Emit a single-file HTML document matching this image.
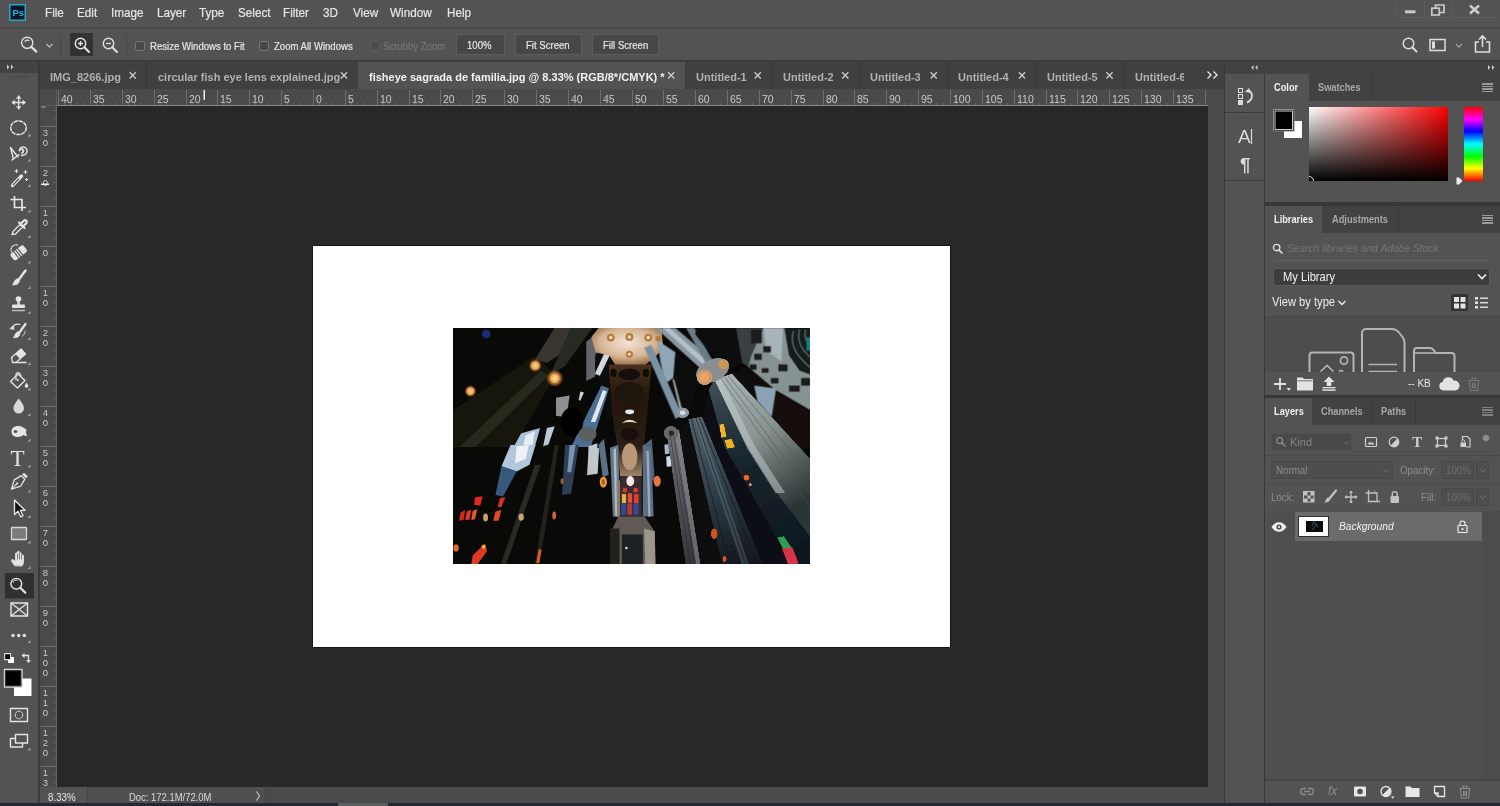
<!DOCTYPE html>
<html lang="en">
<head>
<meta charset="utf-8">
<title>Photoshop</title>
<style>
*{box-sizing:border-box;margin:0;padding:0}
html,body{width:1500px;height:806px;overflow:hidden;background:#535353}
body{position:relative;will-change:transform;font-family:"Liberation Sans",sans-serif;font-size:12px;color:#dcdcdc}
.a{position:absolute}
.t{position:absolute;white-space:nowrap;line-height:1}
svg{position:absolute;overflow:visible}
/* top bars */
#menubar{left:0;top:0;width:1500px;height:27px;background:#535353}
#optbar{left:0;top:27px;width:1500px;height:34px;background:#535353;border-top:2px solid #484848;border-bottom:1px solid #3a3a3a}
.menu{top:6px;font-size:13px;color:#e6e6e6;-webkit-text-stroke:.2px #e6e6e6;transform:scaleX(.9);transform-origin:0 50%}
.opt{top:40.500px;font-size:11px;color:#e6e6e6;-webkit-text-stroke:.2px #e6e6e6;transform:scaleX(.87);transform-origin:0 50%}
.btn{top:34px;height:21px;background:#474747;border:1px solid #5c5c5c}
/* doc tabs */
#tabbar{left:40px;top:61px;width:1185px;height:28px;background:#404040}
.tab{top:71.500px;font-size:11px;font-weight:bold;color:#b0b0b0}
.tsep{top:62px;width:1px;height:27px;background:#383838}
/* toolbar */
#tools{left:0;top:61px;width:38px;height:745px;background:#535353}
#toolshead{left:0;top:61px;width:38px;height:12px;background:#424242}
#gap1{left:38px;top:61px;width:2px;height:745px;background:#3a3a3a}
/* rulers */
#hruler{left:40px;top:89px;width:1168px;height:17px;background:#4a4a4a;border-bottom:1px solid #8a8a8a}
#vruler{left:40px;top:106px;width:17px;height:681px;background:#4a4a4a;border-right:1px solid #666}
.rl{font-size:11px;color:#c4c4c4}
#canvasbg{left:57px;top:106px;width:1151px;height:681px;background:#282828}
#vscroll{left:1208px;top:89px;width:16px;height:717px;background:#4a4a4a}
#status{left:40px;top:787px;width:1168px;height:19px;background:#4a4a4a}
#paper{left:313px;top:246px;width:637.300px;height:400.600px;background:#fff;box-shadow:0 0 0 1px #141414}
/* right dock */
#dockhead{left:1225px;top:61px;width:275px;height:13px;background:#424242}
#dockline{left:1224px;top:61px;width:1px;height:745px;background:#383838}
#iconstrip{left:1225px;top:74px;width:39px;height:732px;background:#535353}
#dockline2{left:1264px;top:74px;width:1px;height:732px;background:#383838}
.panel{left:1265px;width:235px;background:#535353}
.ptabs{left:1265px;width:235px;height:27px;background:#424242}
.ptab{font-size:11px;font-weight:bold;color:#a8a8a8;transform:scaleX(.84);transform-origin:0 50%}
.ptab.on{color:#f0f0f0}
.ptabon{background:#535353;height:27px}
.hamb{width:11px;height:9px;background:repeating-linear-gradient(to bottom,#9a9a9a 0,#9a9a9a 1.500px,transparent 1.500px,transparent 2.500px)}
.sep{left:1265px;width:235px;height:4px;background:#383838}
</style>
</head>
<body>
<!-- MENU BAR -->
<div id="menubar" class="a"></div>
<svg style="left:9px;top:4px" width="17" height="17" viewBox="0 0 17 17"><rect x="0.75" y="0.75" width="15.5" height="15.5" fill="#081828" stroke="#2aa6cc" stroke-width="1.500"/><text x="3.400" y="12.200" font-family="Liberation Sans, sans-serif" font-size="9.500" font-weight="bold" fill="#30b0dc">Ps</text></svg>
<div class="t menu" style="left:45px">File</div>
<div class="t menu" style="left:77px">Edit</div>
<div class="t menu" style="left:111px">Image</div>
<div class="t menu" style="left:157px">Layer</div>
<div class="t menu" style="left:199px">Type</div>
<div class="t menu" style="left:238px">Select</div>
<div class="t menu" style="left:283px">Filter</div>
<div class="t menu" style="left:323px">3D</div>
<div class="t menu" style="left:353px">View</div>
<div class="t menu" style="left:390px">Window</div>
<div class="t menu" style="left:447px">Help</div>
<!-- window controls -->
<svg style="left:1395px;top:2px" width="105" height="20" viewBox="0 0 105 20">
<path d="M1.500 0v15.500h100M29.500 0v15.500M57.500 0v15.500" stroke="#5d5d5d" stroke-width="1" fill="none"/>
<rect x="10" y="8.300" width="10.500" height="3" fill="#c9c9c9"/>
<rect x="36.800" y="6.200" width="7.500" height="6.800" fill="none" stroke="#c9c9c9" stroke-width="1.700"/>
<path d="M40.500 6.200V3h8.500v7.500h-4.500" fill="none" stroke="#c9c9c9" stroke-width="1.700"/>
<path d="M75 3.500l9 8M84 3.500l-9 8" stroke="#cdcdcd" stroke-width="2.500" fill="none"/>
</svg>
<div id="optbar" class="a"></div>
<!-- zoom tool icon -->
<svg style="left:18px;top:33px" width="40" height="24" viewBox="0 0 40 24">
<circle cx="9.200" cy="9.800" r="5.600" fill="none" stroke="#e0e0e0" stroke-width="1.400"/>
<path d="M13.300 13.900L18.300 18.600" stroke="#e0e0e0" stroke-width="2.200" stroke-linecap="round"/>
<path d="M6.800 8.600a3.200 3.200 0 0 1 4.600-.8" stroke="#e0e0e0" stroke-width="1.200" fill="none"/>
<path d="M28.5 11l3 3 3-3" stroke="#bdbdbd" stroke-width="1.3" fill="none"/>
</svg>
<div class="a" style="left:60px;top:33px;width:1px;height:23px;background:#474747"></div>
<div class="a" style="left:70px;top:33px;width:23px;height:23px;background:#333"></div>
<svg style="left:72px;top:35px" width="20" height="20" viewBox="0 0 20 20">
<circle cx="8.5" cy="8.5" r="5.2" fill="none" stroke="#e6e6e6" stroke-width="1.4"/>
<path d="M12.3 12.3L17 17" stroke="#e6e6e6" stroke-width="2" stroke-linecap="round"/>
<path d="M6 8.5h5M8.5 6v5" stroke="#e6e6e6" stroke-width="1.3"/>
</svg>
<svg style="left:100px;top:35px" width="20" height="20" viewBox="0 0 20 20">
<circle cx="8.5" cy="8.5" r="5.2" fill="none" stroke="#e0e0e0" stroke-width="1.4"/>
<path d="M12.3 12.3L17 17" stroke="#e0e0e0" stroke-width="2" stroke-linecap="round"/>
<path d="M6 8.5h5" stroke="#e0e0e0" stroke-width="1.3"/>
</svg>
<div class="a" style="left:126px;top:33px;width:1px;height:23px;background:#474747"></div>
<div class="a" style="left:135px;top:41px;width:9.500px;height:9.500px;border:1px solid #7a7a7a;border-radius:2.500px;background:#484848"></div>
<div class="t opt" style="left:150px">Resize Windows to Fit</div>
<div class="a" style="left:259px;top:41px;width:9.500px;height:9.500px;border:1px solid #7a7a7a;border-radius:2.500px;background:#484848"></div>
<div class="t opt" style="left:274px">Zoom All Windows</div>
<div class="a" style="left:370px;top:41px;width:9.500px;height:9.500px;border:1px solid #5c5c5c;border-radius:2.500px;background:#4c4c4c"></div>
<div class="t opt" style="left:383px;color:#7c7c7c;-webkit-text-stroke:0">Scrubby Zoom</div>
<div class="a btn" style="left:456px;width:49px"></div><div class="t opt" style="left:467px;top:40px">100%</div>
<div class="a btn" style="left:515px;width:67px"></div><div class="t opt" style="left:526px;top:40px">Fit Screen</div>
<div class="a btn" style="left:592px;width:67px"></div><div class="t opt" style="left:603px;top:40px">Fill Screen</div>
<!-- right icons -->
<svg style="left:1400px;top:34px" width="96" height="22" viewBox="0 0 96 22">
<circle cx="8.5" cy="9.5" r="5.3" fill="none" stroke="#dedede" stroke-width="1.5"/>
<path d="M12.5 13.5L16.5 17.5" stroke="#dedede" stroke-width="1.8" stroke-linecap="round"/>
<rect x="30" y="5.5" width="15" height="11" fill="none" stroke="#dedede" stroke-width="1.5"/>
<rect x="32" y="7.5" width="3" height="7" fill="#dedede"/>
<path d="M56 10l3 3 3-3" stroke="#a0a0a0" stroke-width="1.3" fill="none"/>
<path d="M79 8h-3.5v10h14V8H86" fill="none" stroke="#dedede" stroke-width="1.6"/>
<path d="M82.5 13V2.5M79 5.5l3.5-3.5 3.5 3.5" fill="none" stroke="#dedede" stroke-width="1.6"/>
</svg>

<!-- TOOLBAR -->
<div id="tools" class="a"></div>
<div id="toolshead" class="a"></div>
<div id="gap1" class="a"></div>
<svg style="left:0;top:61px" width="40" height="745" viewBox="0 61 40 745" fill="none" stroke="#e4e4e4" stroke-width="1.4" stroke-linejoin="round" stroke-linecap="round">
<!-- header chevrons -->
<path d="M7 64.5l2.3 2.5-2.3 2.5zM11 64.5l2.3 2.5-2.3 2.5z" fill="#d0d0d0" stroke="none"/>
<path d="M9 77h20" stroke="#4b4b4b" stroke-width="2" stroke-dasharray="1 1"/>
<!-- move -->
<g stroke-width="1.300"><path d="M18.700 96.500v12M12.700 102.500h12"/><path d="M16.700 98.200l2-2.600 2 2.600zM16.700 106.800l2 2.600 2-2.600zM14.400 100.500l-2.600 2 2.600 2zM23 100.500l2.600 2-2.600 2z" fill="#e4e4e4" stroke-width=".6"/></g>
<!-- elliptical marquee -->
<ellipse cx="18.500" cy="127.800" rx="7.800" ry="6.800" stroke-dasharray="3.200 1.800" stroke-width="1.500"/>
<path d="M30.500 136.5v-3l-3 3z" fill="#a4a4a4" stroke="none"/>
<!-- magnetic lasso -->
<path d="M20 148.500a4 4 0 1 1 3.500 6.500l-2 .5M10.500 147.500l7.500 9.500M10.500 147.500l3 11.500M12 160l7-5.500"/>
<path d="M19.500 150.500a2 2 0 1 1 2.500 2.500" stroke-width="1.800"/>
<path d="M30.500 161.5v-3l-3 3z" fill="#a4a4a4" stroke="none"/>
<!-- magic wand -->
<path d="M12.500 185.500l9-9.500" stroke-width="3.400"/><path d="M13.200 184.800l5.500-5.800" stroke="#535353" stroke-width="1.200"/>
<path d="M16.500 169.500v3M15 171h3M25.500 170.500v3M24 172h3M26.500 178.500v2M25.500 179.500h2" stroke-width="1.100"/>
<path d="M30.500 187v-3l-3 3z" fill="#a4a4a4" stroke="none"/>
<!-- crop -->
<path d="M14.500 196v11.500h11.500M10.500 199.500h11.500v11.500" stroke-width="1.700" stroke-linecap="butt"/>
<path d="M30.500 212.5v-3l-3 3z" fill="#a4a4a4" stroke="none"/>
<!-- eyedropper -->
<path d="M12 234.500l1-3 7-7 2.500 2.500-7 7z" stroke-width="1.300"/><path d="M19 222.500l5.500 5.500M21 223.500l3-3a1.800 1.800 0 0 1 2.500 2.500l-3 3" stroke-width="2.200"/>
<path d="M30.500 238v-3l-3 3z" fill="#a4a4a4" stroke="none"/>
<!-- healing brush -->
<g transform="rotate(-38 18.500 253)"><rect x="10.500" y="248.800" width="16.500" height="8.400" rx="2.500" fill="#e4e4e4" stroke="none"/><path d="M15.500 249v8M18 249v8M20.500 249v8" stroke="#535353" stroke-width="1.100"/></g>
<path d="M11.500 252a5 5 0 0 1 7-6.500" stroke-width="1.100" stroke-dasharray="1.500 1"/>
<path d="M30.500 263.5v-3l-3 3z" fill="#a4a4a4" stroke="none"/>
<!-- brush -->
<path d="M25.500 270.500l-7 9.500" stroke-width="2.400"/><path d="M17.500 279l1.800 1.800c0 3-3.500 4.500-7 4 2-1.500 1.500-5.200 5.200-5.800z" fill="#e4e4e4" stroke-width=".8"/>
<path d="M30.500 289v-3l-3 3z" fill="#a4a4a4" stroke="none"/>
<!-- stamp -->
<circle cx="18.500" cy="299" r="2.800" fill="#e4e4e4" stroke="none"/><path d="M17.300 300v5h2.400v-5z" fill="#e4e4e4" stroke="none"/><rect x="12" y="304.500" width="13" height="3.600" rx="1" fill="#e4e4e4" stroke="none"/><path d="M12.500 310.500h12" stroke-width="1.400" stroke="#bdbdbd"/>
<path d="M30.500 314v-3l-3 3z" fill="#a4a4a4" stroke="none"/>
<!-- history brush -->
<path d="M25.500 324l-6.500 9" stroke-width="2.200"/><path d="M18 332l1.800 1.800c0 3-3.200 4.200-6.500 3.800 2-1.500 1.200-5 4.700-5.600z" fill="#e4e4e4" stroke-width=".8"/>
<path d="M12 327.500a7 7 0 0 1 8-3" stroke-width="1.100"/><path d="M10 328.500l3.500-2.800.5 3.500z" fill="#e4e4e4" stroke-width=".6"/>
<path d="M25 331a7 7 0 0 1-3 5.500" stroke-width="1" stroke-dasharray="1.200 1.200"/>
<path d="M30.500 340v-3l-3 3z" fill="#a4a4a4" stroke="none"/>
<!-- eraser -->
<path d="M11.500 357.500l9.500-8.500 4.500 5-9.500 8.500h-3.500z" stroke-width="1.300"/><path d="M15.500 354l5.500-5 4.500 5-5.500 5z" fill="#e4e4e4" stroke="none"/><path d="M16 362.500h10" stroke-width="1.300"/>
<path d="M30.500 365v-3l-3 3z" fill="#a4a4a4" stroke="none"/>
<!-- paint bucket -->
<path d="M10.500 381.500l7.500-7.500 7 6.500-7.500 7.500z" stroke-width="1.400"/><path d="M16 380v-5.500a2 2 0 0 1 3.500-1.200l1.500 2.200" stroke-width="1.200"/><circle cx="17.800" cy="380" r="1" fill="#e4e4e4" stroke="none"/>
<path d="M26.500 382.500c1.200 1.800 1.800 2.800 1.800 3.600a1.800 1.800 0 0 1-3.600 0c0-.8.600-1.800 1.800-3.600z" fill="#e4e4e4" stroke="none"/>
<path d="M30.500 390.5v-3l-3 3z" fill="#a4a4a4" stroke="none"/>
<!-- blur (drop) -->
<path d="M18.700 398.500c3 4 5.300 6.800 5.300 9.700a5.300 5.300 0 0 1-10.600 0c0-2.900 2.300-5.700 5.300-9.700z" fill="#d8d8d8" stroke="none"/>
<path d="M30.500 416v-3l-3 3z" fill="#a4a4a4" stroke="none"/>
<!-- dodge -->
<path d="M11.500 431.500c0-3.800 3.500-6 7.500-5.500 3.500.4 5 2.500 7.500 3.500l-.5 2.500 1 4.500-3.500-1.500c-1.500 1.200-3.500 2-6 2-4 0-6-2.500-6-5.500z" fill="#e4e4e4" stroke="none"/><ellipse cx="15.500" cy="431.500" rx="1.900" ry="1.500" fill="#535353" stroke="none"/>
<path d="M30.500 441.5v-3l-3 3z" fill="#a4a4a4" stroke="none"/>
<!-- type tool -->
<text x="10.5" y="465.5" font-family="Liberation Serif, serif" font-size="23" fill="#e4e4e4" stroke="none">T</text>
<path d="M30.500 467.500v-3l-3 3z" fill="#a4a4a4" stroke="none"/>
<!-- pen -->
<g transform="rotate(45 18.500 482)"><path d="M18.500 492l-4.500-8.500 2-8h5l2 8z" stroke-width="1.300"/><path d="M18.500 492v-7" stroke-width="1"/><circle cx="18.500" cy="484" r="1.100" fill="#e4e4e4" stroke="none"/><rect x="15.800" y="471.500" width="5.400" height="2.600" fill="#e4e4e4" stroke="none"/></g>
<path d="M30.500 492.5v-3l-3 3z" fill="#a4a4a4" stroke="none"/>
<!-- path selection arrow -->
<path d="M14.500 500v14.500l3.500-3.200 2.700 5.500 2.300-1.100-2.700-5.400h4.700z" fill="#111" stroke="#eaeaea" stroke-width="1.300"/>
<path d="M30.500 518v-3l-3 3z" fill="#a4a4a4" stroke="none"/>
<!-- rectangle -->
<rect x="11.500" y="527.500" width="15" height="12" fill="#7a7a7a" stroke="#d8d8d8" stroke-width="1.300" rx=".5"/>
<path d="M30.500 543.5v-3l-3 3z" fill="#a4a4a4" stroke="none"/>
<!-- hand -->
<g transform="translate(0,-2)"><path d="M14.500 567.500c-1.500-2-3-4.200-3-5 0-1 1.200-1.500 2.200-.5l1.800 1.800v-8c0-1.400 2-1.400 2 0v-1.500c0-1.400 2-1.400 2 0v1.500c0-1.300 2-1.300 2 0v2c0-1.200 2-1.200 2 0v6.500c0 1.500-.8 2.500-1.500 3.500z" fill="#e4e4e4" stroke="#e4e4e4" stroke-width=".8"/><path d="M17.500 556v5M19.500 555v6M21.500 556v5" stroke="#535353" stroke-width=".7"/></g>
<path d="M30.500 569v-3l-3 3z" fill="#a4a4a4" stroke="none"/>
<!-- zoom (selected) -->
<rect x="5" y="573" width="29" height="25.500" fill="#303030" stroke="none"/>
<circle cx="16.300" cy="583.800" r="5.400" stroke-width="1.400"/><path d="M20.300 587.800l5 5" stroke-width="2.200"/><path d="M13.200 582.400a3.300 3.300 0 0 1 4-2.300" stroke-width="1"/>
<!-- frame tool -->
<rect x="11" y="603" width="16.500" height="13" stroke-width="1.400"/><path d="M11 603l16.500 13M27.500 603l-16.500 13" stroke-width="1.200"/>
<!-- dots -->
<circle cx="13" cy="635.500" r="1.700" fill="#e4e4e4" stroke="none"/><circle cx="18.700" cy="635.500" r="1.700" fill="#e4e4e4" stroke="none"/><circle cx="24.400" cy="635.500" r="1.700" fill="#e4e4e4" stroke="none"/>
<path d="M30.500 643v-3l-3 3z" fill="#a4a4a4" stroke="none"/>
<!-- default colours + swap -->
<rect x="8" y="657" width="6" height="6" fill="#fff" stroke="none"/><rect x="4.600" y="653.600" width="6" height="6" fill="#000" stroke="#e0e0e0" stroke-width="1.100"/>
<path d="M23.500 655.500h5v5.500" stroke-width="1.300" stroke-linecap="butt" stroke-linejoin="miter"/><path d="M24.500 653l-3 2.500 3 2.500zM26 660l2.500 3 2.500-3z" fill="#e4e4e4" stroke="none"/>
<!-- fg/bg -->
<rect x="14" y="678.500" width="17.500" height="17.500" fill="#fff" stroke="none"/>
<rect x="4.500" y="669.500" width="17.500" height="17.500" fill="#000" stroke="#d6d6d6" stroke-width="1.400"/>
<rect x="5.800" y="670.800" width="14.900" height="14.900" fill="none" stroke="#3a3a3a" stroke-width=".8"/>
<!-- quick mask -->
<rect x="10.500" y="708.500" width="17" height="13" stroke-width="1.400"/><circle cx="19" cy="715" r="3.800" stroke-width="1" stroke-dasharray="1.500 1"/>
<!-- screen mode -->
<rect x="15.500" y="734.500" width="12" height="8.500" stroke-width="1.400"/><path d="M15 738.500h-4.500v8.500h12v-3.500" stroke-width="1.400"/>
<path d="M30.500 750.5v-3l-3 3z" fill="#a4a4a4" stroke="none"/>
</svg>

<!-- DOC TABS -->
<div id="tabbar" class="a"></div>
<div class="a" style="left:358px;top:62px;width:327px;height:27px;background:#535353"></div>
<div class="a tsep" style="left:146px"></div>
<div class="a tsep" style="left:772px"></div>
<div class="a tsep" style="left:859px"></div>
<div class="a tsep" style="left:947px"></div>
<div class="a tsep" style="left:1036px"></div>
<div class="a tsep" style="left:1124px"></div>
<div class="t tab" style="left:50px">IMG_8266.jpg</div>
<div class="t tab" style="left:158px">circular fish eye lens explained.jpg</div>
<div class="t tab" style="left:369px;color:#f2f2f2">fisheye sagrada de familia.jpg @ 8.33% (RGB/8*/CMYK) *</div>
<div class="t tab" style="left:696px">Untitled-1</div>
<div class="t tab" style="left:783px">Untitled-2</div>
<div class="t tab" style="left:870px">Untitled-3</div>
<div class="t tab" style="left:958px">Untitled-4</div>
<div class="t tab" style="left:1047px">Untitled-5</div>
<div class="t tab" style="left:1135px;width:48.500px;overflow:hidden">Untitled-6</div>
<svg style="left:0;top:0" width="1500" height="100" viewBox="0 0 1500 100" fill="none" stroke="#cdcdcd" stroke-width="1.300"><path d="M129.6 72.300l6.200 6.200M135.8 72.300l-6.200 6.200"/><path d="M340.9 72.300l6.200 6.200M347.1 72.300l-6.200 6.200"/><path d="M668.1 72.300l6.200 6.200M674.3 72.300l-6.200 6.200"/><path d="M754.6 72.300l6.200 6.200M760.8 72.300l-6.200 6.200"/><path d="M842.2 72.300l6.200 6.200M848.4 72.300l-6.200 6.200"/><path d="M930.6 72.300l6.200 6.200M936.8 72.300l-6.200 6.200"/><path d="M1018.9 72.300l6.200 6.200M1025.1 72.300l-6.200 6.200"/><path d="M1106.4 72.300l6.200 6.200M1112.6 72.300l-6.200 6.200"/></svg>
<svg style="left:1206px;top:70px" width="14" height="10" viewBox="0 0 14 10"><path d="M1.5 1.5l3.5 3.5-3.5 3.5M7.5 1.5l3.5 3.5-3.5 3.5" stroke="#e4e4e4" stroke-width="1.4" fill="none"/></svg>

<!-- RULERS + CANVAS -->
<div id="hruler" class="a"></div>
<div id="vruler" class="a"></div>
<div id="canvasbg" class="a"></div>
<svg style="left:40px;top:89px" width="1167" height="17" viewBox="0 0 1167 17" font-family="Liberation Sans, sans-serif" font-size="10.5" fill="#c8c8c8"><path d="M24.6 14v2M30.9 14v2M37.3 14v2M43.7 14v2M56.4 14v2M62.8 14v2M69.2 14v2M75.5 14v2M88.3 14v2M94.6 14v2M101.0 14v2M107.4 14v2M120.1 14v2M126.5 14v2M132.9 14v2M139.2 14v2M152.0 14v2M158.3 14v2M164.7 14v2M171.1 14v2M183.8 14v2M190.2 14v2M196.6 14v2M202.9 14v2M215.7 14v2M222.0 14v2M228.4 14v2M234.8 14v2M247.5 14v2M253.9 14v2M260.3 14v2M266.6 14v2M279.4 14v2M285.7 14v2M292.1 14v2M298.5 14v2M311.2 14v2M317.6 14v2M324.0 14v2M330.3 14v2M343.1 14v2M349.4 14v2M355.8 14v2M362.2 14v2M374.9 14v2M381.3 14v2M387.7 14v2M394.0 14v2M406.8 14v2M413.1 14v2M419.5 14v2M425.9 14v2M438.6 14v2M445.0 14v2M451.4 14v2M457.7 14v2M470.5 14v2M476.8 14v2M483.2 14v2M489.6 14v2M502.3 14v2M508.7 14v2M515.1 14v2M521.4 14v2M534.2 14v2M540.5 14v2M546.9 14v2M553.3 14v2M566.0 14v2M572.4 14v2M578.8 14v2M585.1 14v2M597.9 14v2M604.2 14v2M610.6 14v2M617.0 14v2M629.7 14v2M636.1 14v2M642.5 14v2M648.8 14v2M661.6 14v2M667.9 14v2M674.3 14v2M680.7 14v2M693.4 14v2M699.8 14v2M706.2 14v2M712.5 14v2M725.3 14v2M731.6 14v2M738.0 14v2M744.4 14v2M757.1 14v2M763.5 14v2M769.9 14v2M776.2 14v2M789.0 14v2M795.3 14v2M801.7 14v2M808.1 14v2M820.8 14v2M827.2 14v2M833.6 14v2M839.9 14v2M852.7 14v2M859.0 14v2M865.4 14v2M871.8 14v2M884.5 14v2M890.9 14v2M897.3 14v2M903.6 14v2M916.4 14v2M922.7 14v2M929.1 14v2M935.5 14v2M948.2 14v2M954.6 14v2M961.0 14v2M967.3 14v2M980.1 14v2M986.4 14v2M992.8 14v2M999.2 14v2M1011.9 14v2M1018.3 14v2M1024.7 14v2M1031.0 14v2M1043.8 14v2M1050.1 14v2M1056.5 14v2M1062.9 14v2M1075.6 14v2M1082.0 14v2M1088.4 14v2M1094.7 14v2M1107.5 14v2M1113.8 14v2M1120.2 14v2M1126.6 14v2M1139.3 14v2M1145.7 14v2M1152.1 14v2M1158.4 14v2" stroke="#6c6c6c" stroke-width="1"/><path d="M18.5 1v15M50.5 1v15M82.5 1v15M114.5 1v15M146.5 1v15M177.5 1v15M209.5 1v15M241.5 1v15M273.5 1v15M305.5 1v15M337.5 1v15M369.5 1v15M400.5 1v15M432.5 1v15M464.5 1v15M496.5 1v15M528.5 1v15M560.5 1v15M592.5 1v15M623.5 1v15M655.5 1v15M687.5 1v15M719.5 1v15M751.5 1v15M783.5 1v15M814.5 1v15M846.5 1v15M878.5 1v15M910.5 1v15M942.5 1v15M974.5 1v15M1006.5 1v15M1037.5 1v15M1069.5 1v15M1101.5 1v15M1133.5 1v15M1165.5 1v15" stroke="#6e6e6e" stroke-width="1"/><text x="21.0" y="13.5">40</text><text x="53.0" y="13.5">35</text><text x="85.0" y="13.5">30</text><text x="117.0" y="13.5">25</text><text x="149.0" y="13.5">20</text><text x="180.0" y="13.5">15</text><text x="212.0" y="13.5">10</text><text x="244.0" y="13.5">5</text><text x="276.0" y="13.5">0</text><text x="308.0" y="13.5">5</text><text x="340.0" y="13.5">10</text><text x="372.0" y="13.5">15</text><text x="403.0" y="13.5">20</text><text x="435.0" y="13.5">25</text><text x="467.0" y="13.5">30</text><text x="499.0" y="13.5">35</text><text x="531.0" y="13.5">40</text><text x="563.0" y="13.5">45</text><text x="595.0" y="13.5">50</text><text x="626.0" y="13.5">55</text><text x="658.0" y="13.5">60</text><text x="690.0" y="13.5">65</text><text x="722.0" y="13.5">70</text><text x="754.0" y="13.5">75</text><text x="786.0" y="13.5">80</text><text x="817.0" y="13.5">85</text><text x="849.0" y="13.5">90</text><text x="881.0" y="13.5">95</text><text x="913.0" y="13.5">100</text><text x="945.0" y="13.5">105</text><text x="977.0" y="13.5">110</text><text x="1009.0" y="13.5">115</text><text x="1040.0" y="13.5">120</text><text x="1072.0" y="13.5">125</text><text x="1104.0" y="13.5">130</text><text x="1136.0" y="13.5">135</text><rect x="163.5" y="1" width="1.5" height="10" fill="#ededed"/></svg>
<svg style="left:40px;top:106px" width="17" height="680" viewBox="0 0 17 680" font-family="Liberation Sans, sans-serif" font-size="9.500" fill="#c8c8c8"><path d="M14 4.5h2M14 12.5h2M14 28.5h2M14 36.5h2M14 44.5h2M14 52.5h2M14 68.5h2M14 76.5h2M14 84.5h2M14 92.5h2M14 108.5h2M14 116.5h2M14 124.5h2M14 132.5h2M14 148.5h2M14 156.5h2M14 164.5h2M14 172.5h2M14 188.5h2M14 196.5h2M14 204.5h2M14 212.5h2M14 228.5h2M14 236.5h2M14 244.5h2M14 252.5h2M14 268.5h2M14 276.5h2M14 284.5h2M14 292.5h2M14 308.5h2M14 316.5h2M14 324.5h2M14 332.5h2M14 348.5h2M14 356.5h2M14 364.5h2M14 372.5h2M14 388.5h2M14 396.5h2M14 404.5h2M14 412.5h2M14 428.5h2M14 436.5h2M14 444.5h2M14 452.5h2M14 468.5h2M14 476.5h2M14 484.5h2M14 492.5h2M14 508.5h2M14 516.5h2M14 524.5h2M14 532.5h2M14 548.5h2M14 556.5h2M14 564.5h2M14 572.5h2M14 588.5h2M14 596.5h2M14 604.5h2M14 612.5h2M14 628.5h2M14 636.5h2M14 644.5h2M14 652.5h2M14 668.5h2M14 676.5h2" stroke="#646464" stroke-width="1"/><path d="M1 20.5h15M1 60.5h15M1 100.5h15M1 140.5h15M1 180.5h15M1 220.5h15M1 260.5h15M1 300.5h15M1 340.5h15M1 380.5h15M1 420.5h15M1 460.5h15M1 500.5h15M1 540.5h15M1 580.5h15M1 620.5h15M1 660.5h15" stroke="#6e6e6e" stroke-width="1"/><text x="2.800" y="30.3">3</text><text x="2.800" y="40.1">0</text><text x="2.800" y="70.3">2</text><text x="2.800" y="80.1">0</text><text x="2.800" y="110.3">1</text><text x="2.800" y="120.1">0</text><text x="2.800" y="150.3">0</text><text x="2.800" y="190.3">1</text><text x="2.800" y="200.1">0</text><text x="2.800" y="230.3">2</text><text x="2.800" y="240.1">0</text><text x="2.800" y="270.3">3</text><text x="2.800" y="280.1">0</text><text x="2.800" y="310.3">4</text><text x="2.800" y="320.1">0</text><text x="2.800" y="350.3">5</text><text x="2.800" y="360.1">0</text><text x="2.800" y="390.3">6</text><text x="2.800" y="400.1">0</text><text x="2.800" y="430.3">7</text><text x="2.800" y="440.1">0</text><text x="2.800" y="470.3">8</text><text x="2.800" y="480.1">0</text><text x="2.800" y="510.3">9</text><text x="2.800" y="520.1">0</text><text x="2.800" y="550.3">1</text><text x="2.800" y="560.1">0</text><text x="2.800" y="569.9">0</text><text x="2.800" y="590.3">1</text><text x="2.800" y="600.1">1</text><text x="2.800" y="609.9">0</text><text x="2.800" y="630.3">1</text><text x="2.800" y="640.1">2</text><text x="2.800" y="649.9">0</text><text x="2.800" y="670.3">1</text><text x="2.800" y="680.1">3</text><rect x="1" y="77.500" width="8" height="1.500" fill="#ededed"/><rect x="1.500" y="0.500" width="4" height="1" fill="#b4b4b4"/></svg>
<div class="a" style="left:40px;top:89px;width:17px;height:17px;background:#4a4a4a;border-right:1px solid #5a5a5a;border-bottom:1px solid #5a5a5a"></div>
<div id="vscroll" class="a"></div>
<div id="status" class="a"></div>
<div class="a" style="left:40px;top:787px;width:47px;height:19px;background:#535353"></div>
<div class="t" style="left:48px;top:791.500px;font-size:10.500px;color:#e4e4e4;transform:scaleX(.93);transform-origin:0 50%">8.33%</div>
<div class="a" style="left:87px;top:787px;width:178px;height:19px;background:#505050;border-left:1px solid #464646;border-right:1px solid #464646"></div>
<div class="t" style="left:129px;top:791.500px;font-size:10.500px;color:#dadada;transform:scaleX(.9);transform-origin:0 50%">Doc: 172.1M/72.0M</div>
<svg style="left:254px;top:790px" width="8" height="12" viewBox="0 0 8 12"><path d="M2.500 1.500l3 4.500-3 4.500" fill="none" stroke="#c8c8c8" stroke-width="1.100"/></svg>
<div id="paper" class="a"></div>
<!--PHOTO-->
<svg style="left:453px;top:328px" width="357" height="236" viewBox="453 328 357 236">
<defs>
<clipPath id="pc"><rect x="453" y="328" width="357" height="236"/></clipPath>
<filter id="b1" x="-5%" y="-5%" width="110%" height="110%"><feGaussianBlur stdDeviation="0.75"/></filter>
<radialGradient id="gl"><stop offset="0" stop-color="#ffe0a0"/><stop offset=".55" stop-color="#e89a48"/><stop offset="1" stop-color="#6a3008" stop-opacity="0"/></radialGradient>
<radialGradient id="gceil" cx=".5" cy=".4" r=".65"><stop offset="0" stop-color="#f4e4d6"/><stop offset=".6" stop-color="#d6b494"/><stop offset="1" stop-color="#8c643c"/></radialGradient>
<linearGradient id="gC" gradientUnits="userSpaceOnUse" x1="870" y1="200" x2="1150" y2="560"><stop offset="0" stop-color="#a9b4b6"/><stop offset=".45" stop-color="#8a9492"/><stop offset=".8" stop-color="#4e5856"/><stop offset="1" stop-color="#2a3434"/></linearGradient>
<linearGradient id="gCs" gradientUnits="userSpaceOnUse" x1="850" y1="230" x2="1100" y2="760"><stop offset="0" stop-color="#3c4c54"/><stop offset=".4" stop-color="#18262e"/><stop offset="1" stop-color="#0e181e"/></linearGradient>
<linearGradient id="gB" gradientUnits="userSpaceOnUse" x1="790" y1="320" x2="920" y2="770"><stop offset="0" stop-color="#52626c"/><stop offset=".5" stop-color="#303e48"/><stop offset="1" stop-color="#12191e"/></linearGradient>
<linearGradient id="gA" gradientUnits="userSpaceOnUse" x1="720" y1="360" x2="790" y2="770"><stop offset="0" stop-color="#727076"/><stop offset="1" stop-color="#36343a"/></linearGradient>
<linearGradient id="gvault" x1="0" y1="0" x2="0" y2="1"><stop offset="0" stop-color="#4a301c"/><stop offset=".3" stop-color="#22160c"/><stop offset=".75" stop-color="#2c2016"/><stop offset="1" stop-color="#a08468"/></linearGradient>
</defs>
<g clip-path="url(#pc)">
<rect x="453" y="328" width="357" height="236" fill="#090908"/>
<g filter="url(#b1)">

<!-- ===== Q1 upper-left (zoom 450,325 scale 6.604) ===== -->
<g transform="translate(450,325) scale(0.15142)">
<polygon points="20,806 420,806 700,330 560,200 20,560" fill="#12130d"/>
<polygon points="60,806 170,806 650,335 600,300" fill="#27291a"/>
<polygon points="690,20 800,20 720,200 640,250 560,230" fill="#38362e"/>
<polygon points="800,20 940,20 760,270 660,330 720,200" fill="#282a24"/>
<circle cx="240" cy="60" r="28" fill="#1c3a9a" opacity=".8"/>
<circle cx="135" cy="437" r="42" fill="url(#gl)"/>
<circle cx="563" cy="268" r="46" fill="url(#gl)"/>
<circle cx="692" cy="352" r="60" fill="url(#gl)"/>
<circle cx="692" cy="352" r="36" fill="none" stroke="#7a4a18" stroke-width="8" opacity=".6"/>
<polygon points="900,110 1000,30 1040,30 960,200 960,340 900,370" fill="#62666a"/>
<polygon points="960,200 1060,200 1075,600 1040,640 1000,400 960,340" fill="#0e0c0a"/>
<polygon points="1040,140 1078,152 990,335 957,322" fill="#d4d8dc"/>
<polygon points="1000,400 1050,420 930,806 800,806 900,600" fill="#4e6e92"/>
<polygon points="1010,430 1035,440 960,640 930,640" fill="#dfe8f0"/>
<polygon points="700,480 790,465 770,610 700,600" fill="#8c9094"/>
<polygon points="860,440 885,445 860,500 850,495" fill="#c8d0d8"/>
<ellipse cx="805" cy="640" rx="75" ry="95" fill="#060606"/>
<polygon points="470,715 595,680 560,806 420,806" fill="#a9c0d8"/>
<polygon points="500,730 560,700 545,806 480,806" fill="#e4ecf4"/>
<polygon points="640,680 692,668 650,790 615,800" fill="#bcc8d4"/>
</g>

<!-- ===== Q3 lower-left (zoom 450,445) ===== -->
<g transform="translate(450,445) scale(0.15142)">
<polygon points="400,0 565,0 525,130 440,175 340,140" fill="#b4c6da"/>
<polygon points="440,10 520,0 500,90 430,120" fill="#eef2f6"/>
<polygon points="340,140 440,175 350,340 300,330" fill="#38587e"/>
<polygon points="560,130 600,130 370,790 335,790" fill="#2a2a22"/>
<polygon points="690,0 720,0 590,790 560,790" fill="#22221c"/>
<polygon points="760,0 850,0 800,320 740,330" fill="#2e4054"/>
<polygon points="790,0 830,0 800,180 775,180" fill="#7894b0"/>
<polygon points="165,345 215,338 200,400 160,395" fill="#e02c20"/>
<polygon points="70,445 100,430 90,495 60,500" fill="#d42a1c"/>
<polygon points="110,440 140,428 130,492 100,497" fill="#e0381c"/>
<polygon points="150,435 180,425 165,490 140,495" fill="#e45a28"/>
<ellipse cx="235" cy="478" rx="16" ry="26" fill="#c8a070"/>
<polygon points="330,350 365,345 340,410 315,410" fill="#d83020"/>
<polygon points="300,440 340,430 320,500 285,500" fill="#e04a28"/>
<ellipse cx="470" cy="476" rx="18" ry="24" fill="#c6a470"/>
<ellipse cx="40" cy="680" rx="18" ry="24" fill="#e06828"/>
<polygon points="150,730 230,650 245,700 180,790 140,790" fill="#e03a20"/>
<ellipse cx="222" cy="672" rx="14" ry="14" fill="#f0b040"/>
<ellipse cx="688" cy="465" rx="12" ry="26" fill="#d86a28"/>
<ellipse cx="740" cy="240" rx="10" ry="20" fill="#a05a28"/>
<polygon points="585,690 605,690 590,780 570,780" fill="#e05a28"/>
<polygon points="915,30 985,20 975,190 905,200" fill="#bfc2c8"/>
</g>

<!-- ===== M centre strip (zoom 580,325 scale 3.342) ===== -->
<g transform="translate(580,325) scale(0.29925)">
<!-- ceiling -->
<polygon points="38,40 62,10 272,10 278,80 245,112 218,134 118,134 98,102 52,92" fill="url(#gceil)"/>
<g fill="#b47c3c"><circle cx="103" cy="42" r="13"/><circle cx="165" cy="40" r="13"/><circle cx="228" cy="42" r="13"/><circle cx="262" cy="46" r="10"/><circle cx="165" cy="98" r="12"/></g>
<g fill="#f2dcb8"><circle cx="103" cy="42" r="6"/><circle cx="165" cy="40" r="6"/><circle cx="228" cy="42" r="6"/><circle cx="165" cy="98" r="5"/></g>
<!-- vault -->
<polygon points="96,132 240,132 225,300 214,400 206,505 134,505 124,400 108,300" fill="url(#gvault)"/>
<ellipse cx="165" cy="165" rx="36" ry="20" fill="#140e0a"/>
<ellipse cx="165" cy="225" rx="48" ry="34" fill="#1c120c"/>
<ellipse cx="112" cy="160" rx="10" ry="14" fill="#0c0806"/><ellipse cx="220" cy="160" rx="10" ry="14" fill="#0c0806"/>
<ellipse cx="166" cy="290" rx="15" ry="8" fill="#e4e8f0"/>
<path d="M140 328q26-22 52 0q-26-8-52 0z" fill="#ecd8c0"/>
<ellipse cx="166" cy="365" rx="30" ry="22" fill="#1a100a"/>
<ellipse cx="166" cy="440" rx="26" ry="45" fill="#b89878"/>
<!-- side of vault (dark cols + pale strips) -->
<polygon points="28,405 58,395 60,480 32,490" fill="#c0c8cc"/>
<polygon points="62,400 80,380 96,500 76,510" fill="#5a6e84"/>
<polygon points="214,400 240,380 250,520 228,520" fill="#4e6278"/>
<ellipse cx="25" cy="365" rx="30" ry="24" fill="#5c5e5e"/>
<ellipse cx="78" cy="525" rx="12" ry="18" fill="#f09a3a"/><ellipse cx="78" cy="525" rx="5" ry="10" fill="#a85a18"/>
<ellipse cx="258" cy="522" rx="12" ry="18" fill="#e8743a"/>
<polygon points="100,410 128,400 134,640 110,640" fill="#66788c"/>
<polygon points="112,415 120,412 126,640 118,640" fill="#b0bcc8"/>
<polygon points="210,400 238,410 246,640 210,640" fill="#5c6e84"/>
<polygon points="222,420 230,422 236,640 228,640" fill="#9aa8b8"/>
<polygon points="122,520 134,520 134,640 124,640" fill="#8a7a68"/>
<!-- stained glass -->
<rect x="134" y="505" width="72" height="135" fill="#3a2c30"/>
<ellipse cx="168" cy="522" rx="13" ry="17" fill="#fce8e0"/>
<circle cx="150" cy="552" r="8" fill="#d83a2a"/><circle cx="186" cy="552" r="8" fill="#d83a2a"/>
<rect x="140" y="565" width="14" height="30" fill="#e8b040"/><rect x="160" y="562" width="14" height="32" fill="#e0503a"/><rect x="180" y="565" width="16" height="30" fill="#d8402e"/>
<rect x="138" y="596" width="16" height="38" fill="#2c4c9c"/><rect x="158" y="596" width="16" height="38" fill="#b83838"/><rect x="178" y="596" width="18" height="38" fill="#3a4a8c"/>
<!-- apse bottom -->
<polygon points="128,640 216,640 250,690 252,800 100,800 104,690" fill="#5e5a54"/>
<polygon points="214,680 250,690 252,800 218,800" fill="#9c968c"/>
<rect x="140" y="700" width="70" height="100" fill="#1c2026"/>
<rect x="100" y="680" width="32" height="120" fill="#24221e"/>
<circle cx="155" cy="745" r="4" fill="#f0f0f0"/>
<!-- white window right of vault -->
<polygon points="288,440 306,436 308,472 290,474" fill="#d0dcec"/>
<polygon points="282,400 296,398 298,430 284,432" fill="#a8b8cc"/>
</g>

<!-- ===== Q2 upper-right (zoom 630,325) ===== -->
<g transform="translate(630,325) scale(0.15142)">
<polygon points="170,20 300,20 570,250 480,300" fill="#8796a0"/>
<polygon points="215,20 262,20 535,262 505,280" fill="#b4c0c8"/>
<polygon points="370,20 425,20 545,235 500,250" fill="#6a7c88"/>
<polygon points="180,100 300,180 285,350 235,385 200,240" fill="#8ea6b6"/>
<polygon points="95,150 140,130 345,600 300,620" fill="#7a92a4"/>
<polygon points="280,360 330,350 360,560 330,570" fill="#9aa4aa"/>
<polygon points="300,185 480,300 440,420 400,560 345,560 290,350" fill="#100c0a"/>
<polygon points="440,20 720,20 760,250 650,300 570,240 430,60" fill="#0a0a0a"/>
<!-- wall upper right -->
<polygon points="700,20 890,20 800,210 780,275 740,250" fill="#394143"/>
<polygon points="880,20 1030,20 1202,330 1202,570 960,430 780,275 800,205" fill="#879292"/>
<polygon points="880,20 1010,20 1000,240 900,170" fill="#a8b4b8"/>
<g fill="#1a1c1c"><rect x="800" y="30" width="70" height="90"/><rect x="880" y="140" width="50" height="40"/><rect x="820" y="190" width="50" height="40"/><rect x="790" y="260" width="45" height="35"/><rect x="980" y="260" width="60" height="45"/><rect x="1130" y="350" width="60" height="50"/><rect x="1050" y="400" width="70" height="40"/><rect x="930" y="350" width="50" height="35"/><rect x="870" y="285" width="45" height="30"/></g>
<polygon points="1020,20 1202,20 1202,330 1120,300 1050,200" fill="#121a1a"/>
<path d="M1080 40q-40 120 110 240M1120 30q-30 100 80 190M1160 30q-20 60 40 130" stroke="#5a6a6c" stroke-width="10" fill="none"/>
<rect x="1165" y="80" width="30" height="90" fill="#1a7a80"/>
<!-- dark right of column C -->
<polygon points="660,320 760,270 960,430 1202,570 1202,806 1090,806" fill="#0c0a08"/>
<polygon points="940,440 1202,575 1202,806 1100,806 930,610" fill="#14100c"/>
<polygon points="820,400 965,420 935,610 840,500" fill="#8aa2b4"/>
</g>

<!-- ===== Z0 big columns (zoom 440,315 scale 3.1) ===== -->
<g transform="translate(440,315) scale(0.32258)">
<!-- column A -->
<polygon points="702,362 741,355 808,775 762,775" fill="url(#gA)"/>
<polygon points="728,360 741,358 808,775 794,775" fill="#908e96" opacity=".55"/>
<circle cx="716" cy="366" r="22" fill="#66686a"/><circle cx="717" cy="366" r="8" fill="#262626"/>
<!-- gap between A and B -->
<polygon points="741,355 772,322 876,775 808,775" fill="#0b0d0f"/>
<!-- column B -->
<polygon points="770,323 812,315 1002,775 875,775" fill="url(#gB)"/>
<polygon points="787,320 800,317 958,775 936,775" fill="#7c8e98" opacity=".3"/>
<ellipse cx="752" cy="303" rx="20" ry="16" fill="#8e98a2"/><ellipse cx="752" cy="303" rx="9" ry="7" fill="#d4dce4"/>
<!-- gap between B and C shade -->
<polygon points="812,315 835,232 885,409 965,552 1090,775 1002,775" fill="#0a1014"/>
<!-- column C shade -->
<polygon points="833,232 850,200 953,409 1044,552 1153,694 1153,775 1090,775 965,552 882,409" fill="url(#gCs)"/>
<!-- column C lit -->
<polygon points="850,200 905,182 1153,452 1153,694 1044,552 953,409" fill="url(#gC)"/>
<polygon points="853,205 872,198 975,405 1070,552 1040,552 953,415" fill="#c4cdd0" opacity=".5"/>
<!-- fluting -->
<path d="M893 188L1153 500M882 192L1153 560M870 196L1100 520L1153 610" stroke="#4e5856" stroke-width="3" opacity=".45" fill="none"/>
<path d="M779 321L898 775M793 318L948 775M803 316L985 775" stroke="#10181e" stroke-width="4" opacity=".5" fill="none"/>
<path d="M712 362L776 775M722 360L790 775" stroke="#2a282e" stroke-width="3" opacity=".5" fill="none"/>
<!-- capital C -->
<ellipse cx="845" cy="172" rx="54" ry="34" fill="#8a8e90" transform="rotate(-25 845 172)"/>
<circle cx="820" cy="193" r="24" fill="#c89c6c"/><circle cx="820" cy="193" r="15" fill="#e8a264"/>
<circle cx="879" cy="153" r="16" fill="#c89858"/>
<!-- lights on the dark teal -->
<polygon points="866,340 880,338 888,378 872,380" fill="#f2b428"/>
<polygon points="882,388 904,384 914,410 890,414" fill="#f0b020"/>
<circle cx="950" cy="504" r="9" fill="#f06422"/><circle cx="962" cy="526" r="4.500" fill="#e88a50"/>
<ellipse cx="850" cy="678" rx="10" ry="16" fill="#d2521e"/>
<ellipse cx="882" cy="756" rx="6" ry="9" fill="#d85a3a"/>
<polygon points="1046,690 1066,686 1092,724 1066,730" fill="#2fa050"/>
<polygon points="1060,724 1092,720 1112,770 1080,775" fill="#d43448"/>
</g>

</g>
</g>
</svg>
<!--/PHOTO-->

<!-- RIGHT DOCK -->
<div id="dockhead" class="a"></div>
<div id="iconstrip" class="a"></div>
<div id="dockline" class="a"></div>
<div id="dockline2" class="a"></div>

<!-- dock header chevrons -->
<svg style="left:1225px;top:61px" width="275" height="13" viewBox="0 0 275 13"><path d="M28.500 4l-2.300 2.500 2.300 2.500zM32.500 4l-2.300 2.500 2.300 2.500zM263 4l2.300 2.500-2.300 2.500zM267 4l2.300 2.500-2.300 2.500z" fill="#d0d0d0"/></svg>
<!-- icon strip -->
<div class="a" style="left:1225px;top:112px;width:39px;height:1px;background:#3c3c3c"></div>
<div class="a" style="left:1225px;top:180px;width:39px;height:1px;background:#3c3c3c"></div>
<svg style="left:1226px;top:74px" width="37" height="110" viewBox="1226 74 37 110" fill="none" stroke="#dcdcdc" stroke-width="1.300">
<path d="M1235 77.500h18M1235 117.500h18" stroke="#484848" stroke-width="2" stroke-dasharray="1 1"/>
<rect x="1238.500" y="88.500" width="4" height="4" stroke-width="1"/><rect x="1238.500" y="94.500" width="4" height="4" stroke-width="1"/><rect x="1238" y="100" width="5" height="5" fill="#dcdcdc" stroke="none"/>
<path d="M1247 102.500c3.800-1.500 6-5 4.500-9.200-.6-1.600-1.800-2.600-3-3" stroke-width="1.900"/><path d="M1245 91.800l4.200-3.800.8 5z" fill="#dcdcdc" stroke="none"/>
<path d="M1251.500 129v15" stroke-width="1.200"/>

</svg>
<div class="t" style="left:1238px;top:127px;font-size:19px;color:#dcdcdc">A</div>
<div class="t" style="left:1239.500px;top:156px;font-size:18px;font-weight:bold;color:#dcdcdc;transform:scaleX(1.050);transform-origin:0 50%">¶</div>

<!-- COLOR PANEL -->
<div class="a ptabs" style="top:74px"></div>
<div class="a ptabon" style="left:1265px;top:74px;width:44px"></div>
<div class="a" style="left:1372px;top:75px;width:1px;height:25px;background:#3a3a3a"></div>
<div class="t ptab on" style="left:1274px;top:82px">Color</div>
<div class="t ptab" style="left:1318px;top:82px">Swatches</div>
<div class="a hamb" style="left:1482px;top:83px"></div>
<div class="a" style="left:1309px;top:107px;width:139px;height:74px;background:linear-gradient(to bottom,rgba(0,0,0,0),#000),linear-gradient(to right,#fff,#f00)"></div>
<div class="a" style="left:1464px;top:107px;width:19px;height:74px;background:linear-gradient(to bottom,#f00 0%,#f0f 17%,#00f 33%,#0ff 50%,#0f0 67%,#ff0 83%,#f00 100%)"></div>
<svg style="left:1265px;top:100px" width="235" height="102" viewBox="1265 100 235 102">
<rect x="1284" y="121" width="18" height="17" fill="#fff"/>
<rect x="1273.500" y="109.500" width="20.500" height="21.500" fill="#000" stroke="#8c8c8c" stroke-width="1"/>
<rect x="1275" y="111" width="17.500" height="18.500" fill="none" stroke="#d0d0d0" stroke-width="1"/>
<path d="M1309 176.500a4.500 4.500 0 0 1 4.500 4.500" fill="none" stroke="#e6e6e6" stroke-width="1"/>
<path d="M1456.500 177.500h2.500l3.500 3.500-3.500 3.500h-2.500z" fill="#eee"/>
</svg>
<div class="a sep" style="top:202px"></div>

<!-- LIBRARIES PANEL -->
<div class="a ptabs" style="top:206px"></div>
<div class="a ptabon" style="left:1265px;top:206px;width:57px"></div>
<div class="a" style="left:1398px;top:207px;width:1px;height:25px;background:#3a3a3a"></div>
<div class="t ptab on" style="left:1274px;top:214px">Libraries</div>
<div class="t ptab" style="left:1332px;top:214px">Adjustments</div>
<div class="a hamb" style="left:1482px;top:215px"></div>
<svg style="left:1272px;top:243px" width="12" height="12" viewBox="0 0 12 12" fill="none" stroke="#e0e0e0"><circle cx="4.600" cy="4.600" r="3.200" stroke-width="1.400"/><path d="M7 7l3 3" stroke-width="1.700" stroke-linecap="round"/></svg>
<div class="t" style="left:1287px;top:243px;font-size:11.500px;font-style:italic;color:#757575;transform:scaleX(.89);transform-origin:0 50%">Search libraries and Adobe Stock</div>
<div class="a" style="left:1273px;top:260px;width:217px;height:1px;background:#5e5e5e"></div>
<div class="a" style="left:1273px;top:268px;width:217px;height:18px;background:#3d3d3d;border:1px solid #5a5a5a;border-radius:3px"></div>
<div class="t" style="left:1283px;top:271px;font-size:12px;color:#f0f0f0;transform:scaleX(.93);transform-origin:0 50%">My Library</div>
<svg style="left:1476px;top:273px" width="12" height="8" viewBox="0 0 12 8"><path d="M2 1.500l4 4 4-4" fill="none" stroke="#f0f0f0" stroke-width="1.600"/></svg>
<div class="t" style="left:1272px;top:296px;font-size:12px;color:#ececec;transform:scaleX(.93);transform-origin:0 50%">View by type</div>
<svg style="left:1337px;top:299px" width="10" height="8" viewBox="0 0 10 8"><path d="M1.500 2l3.500 3.500 3.500-3.500" fill="none" stroke="#ececec" stroke-width="1.400"/></svg>
<div class="a" style="left:1451px;top:294px;width:17px;height:17px;background:#333;border-radius:2px"></div>
<svg style="left:1451px;top:294px" width="40" height="17" viewBox="0 0 40 17" fill="#e4e4e4"><rect x="3" y="3" width="5" height="5"/><rect x="9.500" y="3" width="5" height="5"/><rect x="3" y="9.500" width="5" height="5"/><rect x="9.500" y="9.500" width="5" height="5"/>
<rect x="24" y="3" width="3" height="2.500"/><rect x="24" y="7.500" width="3" height="2.500"/><rect x="24" y="12" width="3" height="2.500"/><rect x="29" y="3.500" width="8" height="1.400"/><rect x="29" y="8" width="8" height="1.400"/><rect x="29" y="12.500" width="8" height="1.400"/></svg>
<div class="a" style="left:1265px;top:316px;width:235px;height:56px;background:#4d4d4d;border-top:1px solid #474747"></div>
<svg style="left:1265px;top:317px" width="235" height="55" viewBox="1265 317 235 55" fill="none" stroke="#b4b4b4" stroke-width="2">
<path d="M1309.500 373v-17.500a3 3 0 0 1 3-3h38a3 3 0 0 1 3 3v17.500"/><circle cx="1344" cy="360.500" r="3.600" stroke-width="1.700"/><path d="M1320.500 371.500l6.500-6 6.500 6" stroke-width="1.700"/><path d="M1339 371.500a2.500 2.500 0 0 1 4 0" stroke-width="1.500"/>
<path d="M1362 373v-40a4 4 0 0 1 4-4h26c3 0 5 1 7 3.500l3.500 4.500c1.500 2 2 3.500 2 6v30"/><path d="M1368.500 364.500h28.500M1368.500 371.500h28.500" stroke-width="1.600"/>
<path d="M1414 373v-22a3 3 0 0 1 3-3h13c2 0 3 1 4 2.500l1.500 2.500h16a3 3 0 0 1 3 3v17"/><path d="M1414.500 353h21" stroke-width="1.600"/>
</svg>
<div class="a" style="left:1265px;top:372px;width:235px;height:23px;background:#535353"></div>
<svg style="left:1265px;top:372px" width="235" height="23" viewBox="1265 372 235 23" fill="#e2e2e2">
<path d="M1280 378v12M1274 384h12" stroke="#e2e2e2" stroke-width="1.800" fill="none"/><path d="M1286.500 388h4.500l-2.250 2.800z"/>
<path d="M1297 377.500h5.500l1.500 1.500h9v11.500h-16z"/><path d="M1297.500 380.800h15" stroke="#535353" stroke-width=".8"/>
<path d="M1329 376.500l5.500 5.500h-3.200v4h-4.600v-4h-3.200z"/><rect x="1322.500" y="387" width="13" height="1.300"/><rect x="1322.500" y="389.300" width="13" height="1.500"/>
<path d="M1443.500 390.500a4.300 4.300 0 0 1-.8-8.500 5.800 5.800 0 0 1 11-1.300 4.900 4.900 0 0 1 1.800 9.800z"/>
<g fill="none" stroke="#787878" stroke-width="1.100"><path d="M1469.500 380.500h9l-.8 10h-7.400z"/><path d="M1468.500 380.500h11M1472 380v-1.800h4v1.800M1472.500 383v5.500M1474 383v5.500M1475.500 383v5.500"/></g>
</svg>
<div class="t" style="left:1408px;top:379px;font-size:10px;color:#e8e8e8">-- KB</div>
<div class="a sep" style="top:395px;height:3px"></div>


<!-- LAYERS PANEL -->
<div class="a ptabs" style="top:398px"></div>
<div class="a ptabon" style="left:1265px;top:398px;width:47px"></div>
<div class="a" style="left:1371px;top:399px;width:1px;height:25px;background:#3a3a3a"></div>
<div class="a" style="left:1415px;top:399px;width:1px;height:25px;background:#3a3a3a"></div>
<div class="t ptab on" style="left:1274px;top:406px">Layers</div>
<div class="t ptab" style="left:1321px;top:406px">Channels</div>
<div class="t ptab" style="left:1381px;top:406px">Paths</div>
<div class="a hamb" style="left:1482px;top:407px;opacity:.7"></div>
<!-- filter row -->
<div class="a" style="left:1271px;top:433px;width:81px;height:18px;background:#494949;border:1px solid #505050"></div>
<svg style="left:1275px;top:436px" width="12" height="12" viewBox="0 0 12 12" fill="none" stroke="#8a8a8a"><circle cx="4.600" cy="4.600" r="3" stroke-width="1.300"/><path d="M7 7l3 3" stroke-width="1.600" stroke-linecap="round"/></svg>
<div class="t" style="left:1290px;top:437px;font-size:11px;color:#858585">Kind</div>
<svg style="left:1342px;top:440px" width="8" height="6" viewBox="0 0 8 6"><path d="M1 1l3 3 3-3" fill="none" stroke="#5c5c5c" stroke-width="1.200"/></svg>
<div class="a" style="left:1353px;top:451px;width:137px;height:1px;background:#4a4a4a"></div>
<svg style="left:1360px;top:430px" width="135" height="24" viewBox="1360 430 135 24" fill="none" stroke="#cfcfcf" stroke-width="1.200">
<rect x="1365.500" y="437.500" width="11" height="9" rx="1"/><path d="M1367.500 444.500l2.200-3 1.500 1.800 1.300-1.200 2 2.400z" fill="#cfcfcf" stroke="none"/>
<circle cx="1394" cy="442" r="4.800"/><path d="M1390.600 445.400a4.800 4.800 0 0 0 6.800-6.800z" fill="#cfcfcf" stroke="none"/>
<text x="1412.300" y="447.300" font-family="Liberation Serif, serif" font-size="15" font-weight="bold" fill="#cfcfcf" stroke="none">T</text>
<rect x="1437.500" y="438.500" width="8" height="7"/><rect x="1435.500" y="436.500" width="3" height="3" fill="#cfcfcf" stroke="none"/><rect x="1444.500" y="436.500" width="3" height="3" fill="#cfcfcf" stroke="none"/><rect x="1435.500" y="444.500" width="3" height="3" fill="#cfcfcf" stroke="none"/><rect x="1444.500" y="444.500" width="3" height="3" fill="#cfcfcf" stroke="none"/>
<path d="M1462.500 440v-3.500h5l2.500 2.500v8h-4"/><rect x="1460.500" y="442.500" width="5.500" height="4.500" fill="#cfcfcf" stroke="none"/><path d="M1461.800 442.500v-1.200a1.500 1.500 0 0 1 3 0v1.200" stroke-width="1"/>
<circle cx="1486" cy="438" r="3.300" fill="#8f8f8f" stroke="#6e6e6e" stroke-width=".8"/>
</svg>
<div class="a" style="left:1265px;top:455px;width:235px;height:1px;background:#4a4a4a"></div>
<!-- blend row -->
<div class="a" style="left:1271px;top:461px;width:122px;height:18px;background:#4e4e4e;border:1px solid #484848"></div>
<div class="t" style="left:1276px;top:465px;font-size:10.500px;color:#8d8d8d;transform:scaleX(.93);transform-origin:0 50%">Normal</div>
<svg style="left:1382px;top:468px" width="8" height="6" viewBox="0 0 8 6"><path d="M1 1l3 3 3-3" fill="none" stroke="#5f5f5f" stroke-width="1.200"/></svg>
<div class="t" style="left:1400px;top:465px;font-size:10.500px;color:#8d8d8d;transform:scaleX(.93);transform-origin:0 50%">Opacity:</div>
<div class="a" style="left:1441px;top:461px;width:33px;height:18px;background:#4e4e4e;border:1px solid #484848"></div>
<div class="t" style="left:1446px;top:465px;font-size:10.500px;color:#6e6e6e;transform:scaleX(.93);transform-origin:0 50%">100%</div>
<div class="a" style="left:1476px;top:461px;width:13px;height:18px;background:#4e4e4e;border:1px solid #484848"></div>
<svg style="left:1479px;top:468px" width="8" height="6" viewBox="0 0 8 6"><path d="M1 1l3 3 3-3" fill="none" stroke="#636363" stroke-width="1.200"/></svg>
<div class="a" style="left:1265px;top:483px;width:235px;height:1px;background:#4a4a4a"></div>
<!-- lock row -->
<div class="t" style="left:1271px;top:492px;font-size:10.500px;color:#8d8d8d;transform:scaleX(.93);transform-origin:0 50%">Lock:</div>
<svg style="left:1300px;top:487px" width="105" height="22" viewBox="1300 487 105 22" fill="none" stroke="#c2c2c2" stroke-width="1.200">
<rect x="1303.500" y="491.500" width="10.500" height="10.500" stroke-width="1"/><path d="M1304 492h3.500v3.500h-3.500zM1310.500 492h3.500v3.500h-3.500zM1307.500 495.500h3v3h-3zM1304 498.500h3.500v3.500h-3.500zM1310.500 498.500h3.500v3.500h-3.500z" fill="#c2c2c2" stroke="none"/>
<path d="M1336 490.500l-6.500 8" stroke-width="2.200" stroke-linecap="round"/><path d="M1328.500 497.500l1.600 1.600c0 2.500-2.800 3.600-5.600 3.300 1.600-1.300 1-4.300 4-4.900z" fill="#c2c2c2" stroke="none"/>
<path d="M1351 491v12M1345 497h12" stroke-width="1.300"/><path d="M1349 493l2-2.300 2 2.300zM1349 501l2 2.300 2-2.300zM1347 495l-2.300 2 2.300 2zM1355 495l2.300 2-2.300 2z" fill="#c2c2c2" stroke="none"/>
<path d="M1368.500 490v11.500h11.500M1365.500 493h11.500v8.500" stroke-width="1.300"/><path d="M1374 490.500l4 3.500" stroke-width="1" stroke-dasharray="1 1"/>
<rect x="1390.500" y="496" width="8.500" height="7" rx="1" fill="#c2c2c2" stroke="none"/><path d="M1392.300 496v-2a2.400 2.400 0 0 1 4.800 0v2" stroke-width="1.400"/>
</svg>
<div class="t" style="left:1421px;top:492px;font-size:10.500px;color:#8d8d8d;transform:scaleX(.93);transform-origin:0 50%">Fill:</div>
<div class="a" style="left:1441px;top:488px;width:33px;height:18px;background:#4e4e4e;border:1px solid #484848"></div>
<div class="t" style="left:1446px;top:492px;font-size:10.500px;color:#6e6e6e;transform:scaleX(.93);transform-origin:0 50%">100%</div>
<div class="a" style="left:1476px;top:488px;width:13px;height:18px;background:#4e4e4e;border:1px solid #484848"></div>
<svg style="left:1479px;top:495px" width="8" height="6" viewBox="0 0 8 6"><path d="M1 1l3 3 3-3" fill="none" stroke="#636363" stroke-width="1.200"/></svg>
<!-- layer list area -->
<div class="a" style="left:1265px;top:511px;width:235px;height:269px;background:#4f4f4f"></div>
<div class="a" style="left:1482px;top:511px;width:18px;height:269px;background:#4c4c4c"></div>
<div class="a" style="left:1295px;top:512px;width:187px;height:29px;background:#6b6b6b"></div>
<svg style="left:1270px;top:519px" width="18" height="16" viewBox="0 0 18 16"><path d="M1.500 8c2-3.200 4.500-4.800 7.500-4.800s5.500 1.600 7.500 4.800c-2 3.200-4.500 4.800-7.500 4.800s-5.500-1.600-7.500-4.800z" fill="#f0f0f0"/><circle cx="9" cy="8" r="2.600" fill="#4f4f4f"/><circle cx="9" cy="8" r="1.100" fill="#f0f0f0"/></svg>
<div class="a" style="left:1298px;top:516px;width:31px;height:21px;background:#fff;border:1px solid #2e2e2e"></div>
<div class="a" style="left:1306px;top:521px;width:17px;height:11px;background:#0a0c10"></div>
<svg style="left:1306px;top:521px" width="17" height="11" viewBox="0 0 17 11"><path d="M8 0l-2 5M9 1l3 5M10.500 3l-4 6" stroke="#5b6a78" stroke-width=".8"/></svg>
<div class="t" style="left:1339px;top:521px;font-size:11px;font-style:italic;color:#f2f2f2;transform:scaleX(.93);transform-origin:0 50%">Background</div>
<svg style="left:1456px;top:519px" width="13" height="15" viewBox="0 0 13 15" fill="none" stroke="#ececec" stroke-width="1.200"><rect x="2" y="6.500" width="9" height="7" rx=".8"/><path d="M4 6.500v-2a2.500 2.500 0 0 1 5 0v2"/><rect x="5.700" y="9" width="1.600" height="2" fill="#ececec" stroke="none"/></svg>
<!-- layers footer -->
<div class="a" style="left:1265px;top:779px;width:235px;height:27px;background:#535353;border-top:2px solid #464646"></div>
<svg style="left:1290px;top:780px" width="200" height="22" viewBox="1290 780 200 22" fill="none" stroke="#8c8c8c" stroke-width="1.300">
<path d="M1306 788.500h-2.500a3 3 0 0 0 0 6h2.500M1308 788.500h2.500a3 3 0 0 1 0 6h-2.500M1304 791.500h6"/>
<rect x="1354" y="786.500" width="12" height="10" rx="1" fill="#e6e6e6" stroke="none"/><circle cx="1360" cy="791.500" r="2.800" fill="#535353" stroke="none"/>
<circle cx="1386" cy="791.500" r="5" stroke="#e6e6e6"/><path d="M1382.500 795a5 5 0 0 0 7-7z" fill="#e6e6e6" stroke="none"/><path d="M1391 796.500h3.500l-1.750 2.200z" fill="#e6e6e6" stroke="none"/>
<path d="M1405.500 786.500h5l1.500 1.500h7.500v9h-14z" fill="#e6e6e6" stroke="none"/>
<path d="M1434.500 786.500h10v10h-6.500l-3.500-3.500z" stroke="#e6e6e6"/><path d="M1434.500 793h3.500v3.500" stroke="#e6e6e6"/>
<g stroke-width="1.100"><path d="M1460.500 788.500h9l-.8 9.500h-7.400z"/><path d="M1459.500 788.500h11M1463 788v-1.800h4v1.800M1463.500 791v5M1465 791v5M1466.500 791v5"/></g>
</svg>
<div class="t" style="left:1328px;top:784px;font-size:13px;font-style:italic;color:#8c8c8c;transform:scaleX(.9);transform-origin:0 50%">fx</div>
<div class="a" style="left:0;top:803px;width:1500px;height:3px;background:#1f2a33"></div>
<div class="a" style="left:338px;top:803px;width:50px;height:3px;background:#5a5f62"></div>
</body>
</html>
